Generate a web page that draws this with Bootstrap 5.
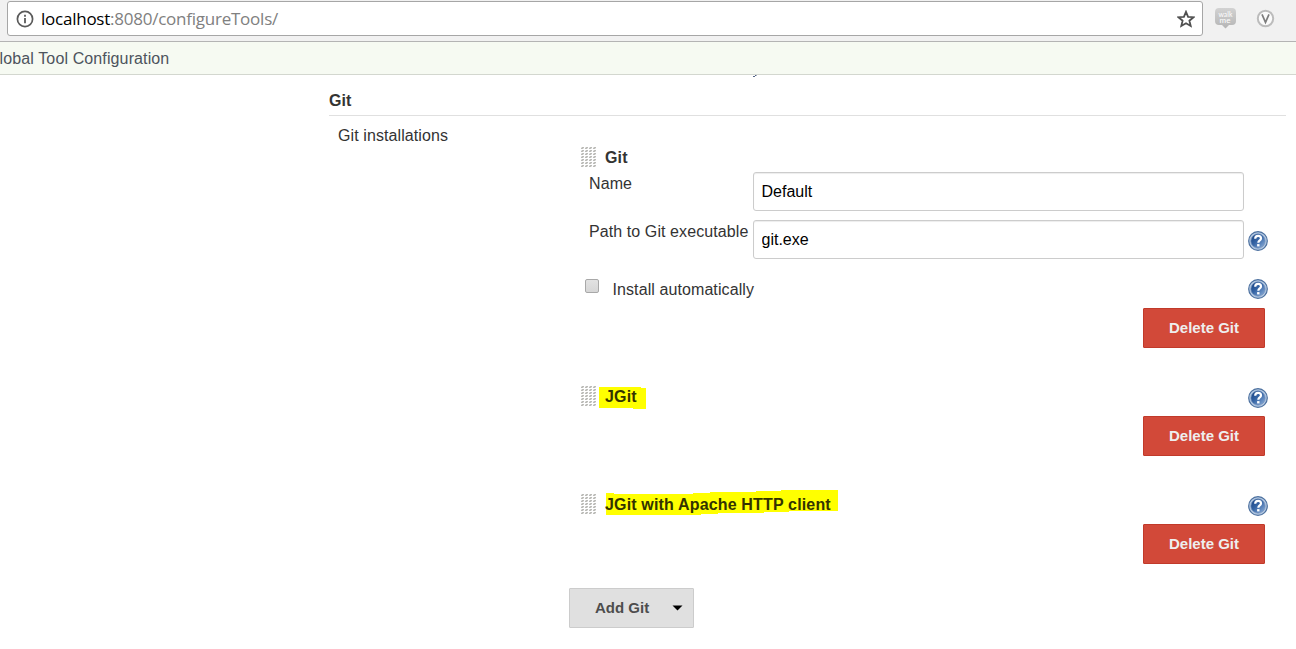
<!DOCTYPE html>
<html lang="en">
<head>
<meta charset="utf-8">
<title>Global Tool Configuration</title>
<link href="https://cdn.jsdelivr.net/npm/bootstrap@5.3.0/dist/css/bootstrap.min.css" rel="stylesheet">
<style>
body{font-family:"Liberation Sans",Arial,sans-serif;font-size:16px;line-height:20px;letter-spacing:.09px;color:#333;background:#fff;overflow:hidden}
svg{display:block;flex:none}
.browser-bar{height:42px;background:#f1f1f1;border-bottom:1px solid #b4b4b4;padding:1px 0 0 7px}
.address{width:1196px;height:35px;border:1px solid #a6a6a6;border-radius:3px;background:#fff;padding:0 7px 0 8px}
.url{font-family:"Open Sans","Noto Sans",sans-serif;font-size:17px;letter-spacing:-.24px;color:#808080;margin-left:7px;white-space:nowrap}
.url b{font-weight:400;color:#000}
.crumbs{height:33px;background:#f6faf2;border-bottom:1px solid #d3d7cf;color:#4d545d;padding-top:7px}
.crumbs span{display:block;margin-left:-13px;white-space:nowrap;letter-spacing:.12px}
.clipped{height:15px;padding-left:424px}
.page{margin-left:329px;width:957px}
.section-title{height:26px;padding-top:1px;font-weight:700;border-bottom:1px solid #e0e0e0}
.left-col{width:240px;padding:10px 0 0 9px}
.right-col{width:717px;padding-top:31px}
.tool-head{height:25px;padding-left:12px}
.tool-title{position:relative;z-index:0;margin-left:9px;padding-top:1px;font-weight:700;line-height:20px;letter-spacing:.16px;white-space:nowrap}
.marker{position:absolute;z-index:-1}
.on-marker{color:#333300}
.field{height:48px;padding-left:20px}
.field label{width:164px;padding-top:2px;white-space:nowrap}
.form-control{width:491px;height:39px;flex:none;border:1px solid #ccc;border-radius:3px;padding:0 7.5px;color:#000;font-size:16px;line-height:37px;box-shadow:inset 0 1px 1px rgba(0,0,0,.075)}
.help{margin:11px 0 0 4px}
.install{height:40px;padding:11px 18px 0 16px}
.install-label{margin-left:13.5px;padding-top:1px}
.box{width:14px;height:14px;border:1px solid #a8a8a8;border-radius:2px;background:linear-gradient(#e2e2e2,#d6d6d6);margin:0}
.btn{border-radius:1px;font-size:15px;font-weight:700;height:40px;padding:0;line-height:38px}
.btn-delete,.btn-delete:hover{width:122px;background:#d24939;border-color:#c13a2a;color:#eee;margin-right:21px}
.btn-add,.btn-add:hover{width:125px;background:#e0e0e0;border-color:#ccc;color:#4d4d4d;padding:0 10px 0 25px}
.tool-gap{margin-top:38px}
.tool-row{height:30px;padding:0 18px 0 12px}
.row-help{margin-top:2px}
</style>
</head>
<body>
<svg width="0" height="0" class="position-absolute" aria-hidden="true">
<defs>
<linearGradient id="blue" x1="0" y1="0" x2="1" y2="1"><stop offset="0" stop-color="#153f80"/><stop offset=".45" stop-color="#3564a4"/><stop offset="1" stop-color="#91b2dc"/></linearGradient>
<linearGradient id="grey" x1="0" y1="0" x2="0" y2="1"><stop offset="0" stop-color="#d2d2d2"/><stop offset="1" stop-color="#b5b5b5"/></linearGradient>
<pattern id="dots" width="4" height="3" patternUnits="userSpaceOnUse"><path fill="#e4e4e4" d="M0 0h3v2H0z"/><path fill="#bcbcb8" d="M1 0h2v1H1zM0 1h2v1H0z"/></pattern>
<symbol id="help" viewBox="0 0 20 20"><circle cx="10" cy="10" r="9.3" fill="#b5cae3" stroke="#4c709f" stroke-width="1.2"/><circle cx="10" cy="10" r="7.2" fill="url(#blue)" stroke="#7592bb" stroke-width=".7"/><path d="M7.2 7.8C7.2 5.7 8.5 4.9 10.1 4.9s2.900.9 2.900 2.500c0 1.900-2.700 2-2.700 4.300" fill="none" stroke="#fff" stroke-width="2.200"/><path d="M9.100 13.100h2.400v2.300H9.100z" fill="#fff"/></symbol>
<symbol id="grip" viewBox="0 0 15 20"><path fill="url(#dots)" d="M0 0h15v20H0z"/></symbol>
</defs>
</svg>

<header class="browser-bar d-flex align-items-start">
  <div class="address d-flex align-items-center">
    <svg width="18" height="18" viewBox="0 0 18 18"><circle cx="9" cy="9" r="7.6" fill="none" stroke="#5a5a5a" stroke-width="1.7"/><path d="M8.1 4.8h1.8v1.900H8.100zM8.100 8h1.800v5.200H8.100z" fill="#5a5a5a"/></svg>
    <span class="url"><b>localhost</b>:8080/configureTools/</span>
    <svg class="ms-auto" width="18" height="18" viewBox="0 0 18 18"><path d="M9 1.800l2.100 5 5.500.4-4.200 3.500 1.300 5.300L9 13.200 4.300 16l1.300-5.300L1.400 7.200l5.500-.4z" fill="none" stroke="#505050" stroke-width="1.800"/></svg>
  </div>
  <svg style="margin:7px 0 0 12px" width="21" height="21" viewBox="0 0 21 21"><path d="M4 0h13q4 0 4 4v9q0 4-4 4h-3l-3.500 3.500L7 17H4q-4 0-4-4V4q0-4 4-4z" fill="url(#grey)"/><text x="10.500" y="8.500" text-anchor="middle" font-size="8" fill="#fff" font-family="Lato" textLength="14" lengthAdjust="spacingAndGlyphs">walk</text><text x="10" y="14.500" text-anchor="middle" font-size="8" fill="#fff" font-family="Lato">me</text></svg>
  <svg style="margin:8px 0 0 20px" width="19" height="19" viewBox="0 0 19 19"><circle cx="9.500" cy="9.500" r="7.700" fill="#fbfbfb" stroke="#bcbcbc" stroke-width="2"/><path d="M6 5.300l3.500 8L13 5.300" fill="none" stroke="#7d7d7d" stroke-width="1.700"/></svg>
</header>

<nav class="crumbs"><span>Global Tool Configuration</span></nav>

<main class="page">
  <div class="clipped"><svg width="5" height="2" viewBox="0 0 5 2"><path d="M2 0h2L3 1H0v1h2z" fill="#536483"/></svg></div>
  <div class="section-title">Git</div>
  <div class="d-flex">
    <div class="left-col">Git installations</div>
    <div class="right-col">
      <section>
        <div class="tool-head d-flex align-items-start"><svg width="15" height="20"><use href="#grip"/></svg><span class="tool-title">Git</span></div>
        <div class="field d-flex align-items-start"><label for="name">Name</label><input id="name" class="form-control" value="Default"></div>
        <div class="field d-flex align-items-start"><label for="path">Path to Git executable</label><input id="path" class="form-control" value="git.exe"><svg class="help" width="20" height="20"><use href="#help"/></svg></div>
        <div class="install d-flex align-items-start"><span class="box"></span><span class="install-label">Install automatically</span><svg class="ms-auto" width="20" height="20"><use href="#help"/></svg></div>
        <div class="d-flex justify-content-end"><button class="btn btn-delete">Delete Git</button></div>
      </section>
      <section class="tool-gap">
        <div class="tool-row d-flex align-items-start"><svg width="15" height="20"><use href="#grip"/></svg><span class="tool-title on-marker"><svg class="marker" style="left:-6px;top:0" width="47" height="23" viewBox="0 0 47 23"><path d="M0 1h42v1h5v21H34v-1H0z" fill="#ff0"/></svg>JGit</span><svg class="ms-auto row-help" width="20" height="20"><use href="#help"/></svg></div>
        <div class="d-flex justify-content-end"><button class="btn btn-delete">Delete Git</button></div>
      </section>
      <section class="tool-gap">
        <div class="tool-row d-flex align-items-start"><svg width="15" height="20"><use href="#grip"/></svg><span class="tool-title on-marker"><svg class="marker" style="left:0;top:-4px" width="233" height="26" viewBox="0 0 233 26"><path d="M1 3h8v1h79V3h17V2h46V1h25V0h57v21h-49v1h-25v1h-46v1H96v1H1z" fill="#ff0"/></svg>JGit with Apache HTTP client</span><svg class="ms-auto row-help" width="20" height="20"><use href="#help"/></svg></div>
        <div class="d-flex justify-content-end"><button class="btn btn-delete">Delete Git</button></div>
      </section>
      <button class="btn btn-add d-flex align-items-center justify-content-between mt-4">Add Git<svg width="11" height="6" viewBox="0 0 11 6"><path d="M.5.5h10l-5 5z" fill="#000"/></svg></button>
    </div>
  </div>
</main>
<script src="https://cdn.jsdelivr.net/npm/bootstrap@5.3.0/dist/js/bootstrap.bundle.min.js"></script>
</body>
</html>
